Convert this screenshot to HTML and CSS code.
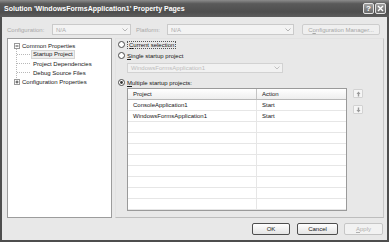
FILE: index.html
```html
<!DOCTYPE html>
<html>
<head>
<meta charset="utf-8">
<link rel="stylesheet" href="styles.css">
</head>
<body>
<div class="window">
  <div class="titlebar">
    <span class="title">Solution 'WindowsFormsApplication1' Property Pages</span>
    <div class="tb-buttons">
      <div class="tb-btn">?</div>
      <div class="tb-btn"><svg width="7" height="7" viewBox="0 0 7 7"><path d="M1 1L6 6M6 1L1 6" stroke="#fff" stroke-width="1.4"/></svg></div>
    </div>
  </div>
  <div class="frame">
    <div class="config">
      <span class="lbl lbl1">Configuration:</span>
      <div class="combo combo1"><span>N/A</span><svg class="chev" width="6" height="4" viewBox="0 0 6 4"><path d="M0.5 0.5L3 3L5.5 0.5" fill="none" stroke="#b5b5b5"/></svg></div>
      <span class="lbl lbl2">Platform:</span>
      <div class="combo combo2"><span>N/A</span><svg class="chev" width="6" height="4" viewBox="0 0 6 4"><path d="M0.5 0.5L3 3L5.5 0.5" fill="none" stroke="#b5b5b5"/></svg></div>
      <div class="cfgbtn">C<u>o</u>nfiguration Manager...</div>
    </div>
    <div class="main">
      <div class="tree">
        <svg class="treelines" width="30" height="45" viewBox="0 0 30 45">
          <path d="M8.5 10V41M9 15.5H22M9 24.5H22M9 33.5H22" stroke="#b8b8b8" stroke-dasharray="1 1" fill="none"/>
        </svg>
        <div class="trow">
          <svg class="exp" width="6" height="6" viewBox="0 0 6 6"><rect x="0.5" y="0.5" width="5" height="5" fill="#fff" stroke="#9a9a9a"/><path d="M1.5 3H4.5" stroke="#444"/></svg>
          <span>Common Properties</span>
        </div>
        <div class="trow child"><span class="sel">Startup Project</span></div>
        <div class="trow child"><span class="item">Project Dependencies</span></div>
        <div class="trow child"><span class="item">Debug Source Files</span></div>
        <div class="trow">
          <svg class="exp" width="6" height="6" viewBox="0 0 6 6"><rect x="0.5" y="0.5" width="5" height="5" fill="#fff" stroke="#9a9a9a"/><path d="M1.5 3H4.5M3 1.5V4.5" stroke="#444"/></svg>
          <span>Configuration Properties</span>
        </div>
      </div>
      <div class="panel">
        <div class="radio-row r1">
          <svg class="radio" width="7" height="7" viewBox="0 0 7 7"><circle cx="3.5" cy="3.5" r="3" fill="#fff" stroke="#4a4a4a"/></svg>
          <span class="focus"><u>C</u>urrent selection</span>
        </div>
        <div class="radio-row r2">
          <svg class="radio" width="7" height="7" viewBox="0 0 7 7"><circle cx="3.5" cy="3.5" r="3" fill="#fff" stroke="#4a4a4a"/></svg>
          <span><u>S</u>ingle startup project</span>
        </div>
        <div class="combo combo3"><span>WindowsFormsApplication1</span><svg class="chev" width="6" height="4" viewBox="0 0 6 4"><path d="M0.5 0.5L3 3L5.5 0.5" fill="none" stroke="#c0c0c0"/></svg></div>
        <div class="radio-row r3">
          <svg class="radio" width="7" height="7" viewBox="0 0 7 7"><circle cx="3.5" cy="3.5" r="3" fill="#fff" stroke="#4a4a4a"/><circle cx="3.5" cy="3.5" r="1.4" fill="#333"/></svg>
          <span><u>M</u>ultiple startup projects:</span>
        </div>
        <div class="grid-area">
          <div class="table">
            <div class="row head"><div class="c1">Project</div><div class="c2">Action</div></div>
            <div class="row"><div class="c1">ConsoleApplication1</div><div class="c2">Start</div></div>
            <div class="row"><div class="c1">WindowsFormsApplication1</div><div class="c2">Start</div></div>
            <div class="row"><div class="c1"></div><div class="c2"></div></div>
            <div class="row"><div class="c1"></div><div class="c2"></div></div>
            <div class="row"><div class="c1"></div><div class="c2"></div></div>
            <div class="row"><div class="c1"></div><div class="c2"></div></div>
            <div class="row"><div class="c1"></div><div class="c2"></div></div>
            <div class="row"><div class="c1"></div><div class="c2"></div></div>
            <div class="row"><div class="c1"></div><div class="c2"></div></div>
            <div class="row"><div class="c1"></div><div class="c2"></div></div>
            <div class="row"><div class="c1"></div><div class="c2"></div></div>
          </div>
          <div class="arrows">
            <div class="abtn"><svg width="5" height="6" viewBox="0 0 5 6"><path d="M2.5 0.5L0.5 3H1.8V5.5H3.2V3H4.5Z" fill="#9a9a9a"/></svg></div>
            <div class="abtn down"><svg width="5" height="6" viewBox="0 0 5 6"><path d="M2.5 5.5L0.5 3H1.8V0.5H3.2V3H4.5Z" fill="#9a9a9a"/></svg></div>
          </div>
        </div>
      </div>
    </div>
    <div class="footer">
      <div class="btn ok">OK</div>
      <div class="btn cancel">Cancel</div>
      <div class="btn apply disabled"><u>A</u>pply</div>
    </div>
  </div>
</div>
</body>
</html>
```
FILE: styles.css
```css
* { box-sizing: border-box; }
body {
  margin: 0;
  font-family: "Liberation Sans", Arial, sans-serif;
  font-size: 6px;
  color: #161616;
}
.window {
  width: 389px;
  height: 242px;
  display: flex;
  flex-direction: column;
  background: #e8e8e8;
}
.titlebar {
  height: 17px;
  flex: none;
  display: flex;
  align-items: center;
  justify-content: space-between;
  padding: 0 3px 0 4px;
  background: linear-gradient(#8c8c8c, #5a5a5a 22%, #4e4e4e 70%, #5c5c5c);
  color: #fff;
  font-weight: bold;
  font-size: 7px;
}
.tb-buttons { display: flex; gap: 1px; }
.tb-btn {
  width: 11px;
  height: 11px;
  border: 1px solid #e4e4e4;
  border-radius: 2px;
  background: linear-gradient(#a0a0a0, #6a6a6a);
  color: #fff;
  font-size: 8px;
  display: flex;
  align-items: center;
  justify-content: center;
}
.frame {
  flex: 1;
  display: flex;
  flex-direction: column;
  border: 2px solid #4e4e4e;
  border-top: 0;
  padding: 0 3px 5px 5px;
}
.config {
  margin-top: 7px;
  height: 11px;
  display: flex;
  align-items: center;
  flex: none;
}
.lbl { color: #a8a8a8; }
.lbl1 { width: 45px; }
.lbl2 { width: 31px; margin-left: 5px; }
.combo {
  height: 11px;
  border: 1px solid #cacaca;
  background: #f3f3f3;
  display: flex;
  align-items: center;
  justify-content: space-between;
  padding: 0 2px 0 3px;
  color: #ababab;
}
.combo1 { width: 79px; }
.combo2 { width: 127px; }
.cfgbtn {
  width: 78px;
  margin-left: 8px;
  height: 11px;
  border: 1px solid #cdcdcd;
  border-radius: 2px;
  background: #efefef;
  color: #a6a6a6;
  display: flex;
  align-items: center;
  justify-content: center;
}
.main {
  margin-top: 3px;
  height: 180px;
  flex: none;
  display: flex;
  gap: 3px;
}
.tree {
  width: 105px;
  border: 1px solid #9c9c9c;
  background: #fff;
  position: relative;
  padding-top: 2px;
}
.treelines { position: absolute; left: 0; top: 0; }
.trow {
  height: 9px;
  display: flex;
  align-items: center;
  padding-left: 6px;
  gap: 2px;
  position: relative;
}
.exp { display: block; }
.child { padding-left: 23px; }
.sel {
  background: #eeeeee;
  border: 1px solid #d4d4d4;
  padding: 0 1px;
  line-height: 7px;
}
.item { padding-left: 2px; }
.panel {
  flex: 1;
  border: 1px solid #e2e2e2;
  border-right-color: #c8c8c8;
  border-bottom-color: #bdbdbd;
  padding: 1px 0 0 2px;
}
.radio-row {
  height: 9px;
  display: flex;
  align-items: center;
  gap: 2px;
}
.radio { display: block; }
.r2 { margin-top: 2px; }
.r3 { margin-top: 5px; }
.focus {
  outline: 1px dotted #555;
  outline-offset: 0;
  padding: 0 1px;
  margin-left: 1px;
}
.combo3 {
  margin-top: 3px;
  margin-left: 9px;
  width: 156px;
  height: 10px;
  color: #bdbdbd;
  border-color: #d2d2d2;
  background: #f1f1f1;
}
.grid-area {
  margin-top: 1px;
  display: flex;
  gap: 6px;
}
.table {
  margin-left: 9px;
  width: 220px;
  height: 123px;
  border: 1px solid #9a9a9a;
  background: #fff;
  overflow: hidden;
}
.row {
  display: grid;
  grid-template-columns: 129px 1fr;
  height: 11px;
  border-bottom: 1px solid #e6e6e6;
}
.row > div {
  display: flex;
  align-items: center;
  padding-left: 5px;
}
.row .c1 { border-right: 1px solid #e6e6e6; }
.row.head {
  background: linear-gradient(#ffffff, #eeeeee);
  border-bottom: 1px solid #b8b8b8;
}
.row.head .c1 { border-right-color: #c4c4c4; }
.arrows {
  margin-top: 1px;
  display: flex;
  flex-direction: column;
  gap: 7px;
}
.abtn {
  width: 10px;
  height: 9px;
  border: 1px solid #d2d2d2;
  border-radius: 1px;
  background: #f5f5f5;
  display: flex;
  align-items: center;
  justify-content: center;
}
.footer {
  margin-top: 5px;
  height: 12px;
  flex: none;
  display: flex;
  justify-content: flex-end;
  padding-right: 1px;
}
.btn {
  height: 12px;
  border: 1px solid #4e4e4e;
  border-radius: 2px;
  background: linear-gradient(#ffffff, #e4e4e4);
  display: flex;
  align-items: center;
  justify-content: center;
}
.ok { width: 38px; }
.cancel { width: 41px; margin-left: 7px; }
.apply { width: 39px; margin-left: 6px; }
.disabled { border-color: #c6c6c6; color: #b0b0b0; background: #f2f2f2; }
```
